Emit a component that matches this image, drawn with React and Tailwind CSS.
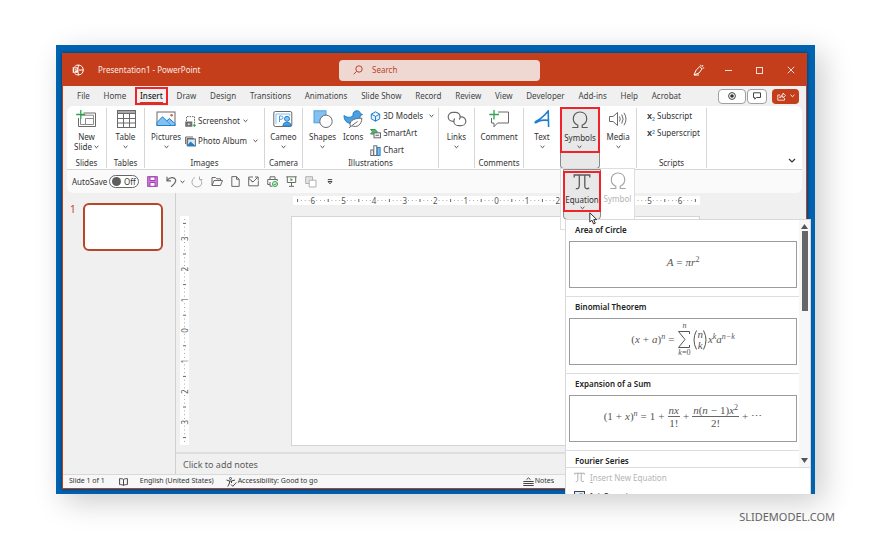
import React, { useState } from 'react';

const TABS_BEFORE = ['File', 'Home'];
const TABS_AFTER = [
  'Draw', 'Design', 'Transitions', 'Animations', 'Slide Show', 'Record',
  'Review', 'View', 'Developer', 'Add-ins', 'Help', 'Acrobat',
];

function Svg({ w = 20, h = 18, children, className = '' }) {
  return (
    <svg
      width={w}
      height={h}
      viewBox={`0 0 ${w} ${h}`}
      fill="none"
      stroke="#6a6a6a"
      strokeWidth="1"
      className={`shrink-0 ${className}`}
      aria-hidden="true"
    >
      {children}
    </svg>
  );
}

function Chevron({ color = '#444', className = '' }) {
  return (
    <Svg w={5} h={4} className={className}>
      <path d="M0.6 0.9 L2.5 2.7 L4.4 0.9" stroke={color} />
    </Svg>
  );
}

function OmegaIcon({ color = '#5a5a5a' }) {
  return (
    <Svg>
      <path
        d="M2.2 16.5 H7.8 V14.2 C5 13 3.3 10.8 3.3 7.8 C3.3 3.8 6 1 10 1 C14 1 16.7 3.8 16.7 7.8 C16.7 10.8 15 13 12.2 14.2 V16.5 H17.8"
        stroke={color}
        strokeWidth="1.2"
      />
    </Svg>
  );
}

function PiIcon({ w = 18, h = 18, color = '#5a5a5a' }) {
  return (
    <svg width={w} height={h} viewBox="0 0 18 18" fill="none" stroke={color} strokeWidth="1.3" aria-hidden="true">
      <path d="M1.2 4.5 V2 H16.8 V4.5 M6.3 2 V12.5 C6.3 15 5 16 2.8 15.6 M11.8 2 V13 C11.8 15.5 13.5 16.4 16.2 15.2" />
    </svg>
  );
}

/* ---------- Ribbon ---------- */

function Group({ label, className = '', children }) {
  return (
    <div className={`flex h-[60px] shrink-0 flex-col border-r border-[#d6d6d6] ${className}`}>
      <div className="flex flex-1 justify-center">{children}</div>
      <div className="h-3 text-center text-[8px] leading-[14px]">{label}</div>
    </div>
  );
}

function BigButton({ icon, label, second, chevron = true }) {
  return (
    <button className="flex flex-col items-center text-[8px] leading-[10px]">
      <span className="mt-[2px] mb-1 flex h-[18px] items-center">{icon}</span>
      <span>{label}</span>
      {second ? (
        <span className="flex items-center gap-[2px]">{second}<Chevron /></span>
      ) : (
        chevron && <span className="flex h-[10px] items-center"><Chevron /></span>
      )}
    </button>
  );
}

function SmallButton({ icon, label, chevronClass }) {
  return (
    <button className="flex h-[11px] items-center gap-[2px] text-[8px] whitespace-nowrap">
      {icon}
      {label}
      {chevronClass && <Chevron className={chevronClass} />}
    </button>
  );
}

function Ribbon() {
  return (
    <div className="mx-1 flex h-16 items-center rounded-t-md border-b border-[#d4d4d4] bg-white">
      <Group label="Slides" className="w-10">
        <BigButton
          label="New"
          second="Slide"
          icon={
            <Svg>
              <path d="M7.5 3 H19.5 V16.5 H2.5 V8" />
              <path d="M4 5.2 H17.5 V14.5 H4.5 V8 M9.5 8.5 V14.5 M9.5 8.5 H17.5" stroke="#8c8c8c" />
              <path d="M4.8 0 V9 M0.2 4.5 H9.2" stroke="#2ea44f" strokeWidth="1.3" />
            </Svg>
          }
        />
      </Group>
      <Group label="Tables" className="w-[38px]">
        <BigButton
          label="Table"
          icon={
            <Svg>
              <rect x="1.5" y="0.5" width="18" height="17" />
              <rect x="1.5" y="0.5" width="18" height="3" fill="#a8a8a8" />
              <path d="M1.5 8.5 H19.5 M1.5 13 H19.5 M7.5 3.5 V17.5 M13.5 3.5 V17.5" />
            </Svg>
          }
        />
      </Group>
      <Group label="Images" className="w-[120px]">
        <div className="flex flex-1 pl-[6px]">
          <BigButton
            label="Pictures"
            icon={
              <Svg>
                <rect x="1" y="2" width="18" height="13.5" fill="#fbfdff" />
                <path d="M1 12.5 L6.5 6.8 L15.5 15.5 H1 Z" fill="#83c1f2" stroke="#1e7fcf" />
                <path d="M10.8 10.8 L13.3 8.6 L19 13.5 V15.5 H15.5" fill="#83c1f2" stroke="#1e7fcf" />
                <circle cx="15.6" cy="5.3" r="1.3" fill="#e8622a" stroke="none" />
              </Svg>
            }
          />
          <div className="flex flex-col gap-[9px] pt-2 pl-1">
            <SmallButton
              label="Screenshot"
              chevronClass="ml-px"
              icon={
                <Svg w={11} h={11}>
                  <path d="M1.5 5 V0.6 H9.5 V7" strokeDasharray="1.5 1" />
                  <rect x="0.8" y="6" width="6" height="4.2" fill="#777" />
                  <circle cx="3.8" cy="8.2" r="1" fill="#ddd" stroke="none" />
                  <path d="M9.3 7.5 V11 M7.7 9.3 H11" stroke="#2ea44f" />
                </Svg>
              }
            />
            <SmallButton
              label="Photo Album"
              chevronClass="ml-1"
              icon={
                <Svg w={11} h={11}>
                  <path d="M0.6 8 V1 H8 M2 9.5 V2.5 H9" />
                  <rect x="2.6" y="3" width="7.8" height="7" fill="#d6eafa" />
                  <path d="M3 9.5 L5.5 6 L9.5 9.5 Z" fill="#1e7fcf" stroke="#1e7fcf" />
                </Svg>
              }
            />
          </div>
        </div>
      </Group>
      <Group label="Camera" className="w-[38px]">
        <BigButton
          label="Cameo"
          icon={
            <Svg>
              <rect x="0.8" y="1.5" width="18" height="15" rx="1.5" />
              <path d="M3 14 V4 H16.8 V6" stroke="#83c1f2" />
              <path d="M6.5 12 V6 H8.2 Q10 6 10 7.7 Q10 9.3 8.2 9.3 H6.5" stroke="#4aa0e0" />
              <circle cx="14" cy="8.8" r="2.5" fill="#83c1f2" stroke="#1e7fcf" />
              <path d="M9.8 16 Q10 12.2 14 12.2 Q18 12.2 18.2 16 Z" fill="#4aa0e0" stroke="#1e7fcf" />
            </Svg>
          }
        />
      </Group>
      <Group label="Illustrations" className="w-[136px]">
        <div className="flex flex-1 gap-[7px] pl-[6px]">
          <BigButton
            label="Shapes"
            icon={
              <Svg>
                <rect x="1" y="0.8" width="12" height="12" fill="#83c1f2" stroke="#4aa0e0" />
                <circle cx="13" cy="11.3" r="6.2" fill="#fff" />
              </Svg>
            }
          />
          <BigButton
            label="Icons"
            chevron={false}
            icon={
              <Svg>
                <path
                  d="M1 5.5 C3.5 7.5 7 8 10 6 C9.5 2.5 11.5 0.8 14 0.8 C16 0.8 17.2 2 17.3 3.5 L19.5 4.5 L17.3 5.6 C17 10 13 13.5 8.5 13.5 C4 13.5 1 10.5 1 5.5 Z"
                  fill="#4aa0e0"
                  stroke="#1e7fcf"
                />
                <path d="M7.5 16.8 C5.5 11.5 10 8 18.8 8.2 C19 14.5 14 18 9 15.8" fill="#fff" />
                <path d="M6 17.8 L14.5 11.5" />
              </Svg>
            }
          />
          <div className="flex flex-col gap-[6px] pt-[3px]">
            <SmallButton
              label="3D Models"
              chevronClass="ml-1"
              icon={
                <Svg w={11} h={11}>
                  <path d="M5.5 0.8 L9.7 3.1 V7.9 L5.5 10.2 L1.3 7.9 V3.1 Z M1.3 3.1 L5.5 5.4 L9.7 3.1 M5.5 5.4 V10.2" stroke="#1e7fcf" fill="#e4f1fb" />
                </Svg>
              }
            />
            <SmallButton
              label="SmartArt"
              icon={
                <Svg w={11} h={11}>
                  <path d="M0.5 1.5 H5 L7.5 3.8 L5 6 H0.5 L2.5 3.8 Z" fill="#58b56f" stroke="#2e9a4b" />
                  <rect x="4" y="4.8" width="6.5" height="5" fill="#f3f3f3" />
                  <path d="M5.5 7.3 H9" />
                </Svg>
              }
            />
            <SmallButton
              label="Chart"
              icon={
                <Svg w={11} h={11}>
                  <rect x="0.8" y="5" width="2.6" height="5.5" />
                  <rect x="3.8" y="0.8" width="3" height="9.7" fill="#fff" />
                  <rect x="7.3" y="2.5" width="2.8" height="8" fill="#83c1f2" stroke="#1e7fcf" />
                </Svg>
              }
            />
          </div>
        </div>
      </Group>
      <Group className="w-9">
        <BigButton
          label="Links"
          icon={
            <Svg>
              <path d="M7.2 11.3 H6 C3.4 11.3 1.2 9.4 1.2 6.8 C1.2 4.2 3.4 2.3 6 2.3 H8.5 C11.1 2.3 13.2 4.2 13.2 6.8 C13.2 7.8 12.8 8.8 12.2 9.5" strokeWidth="1.2" />
              <path d="M12.8 6.8 H14 C16.6 6.8 18.8 8.7 18.8 11.2 C18.8 13.8 16.6 15.7 14 15.7 H11.5 C8.9 15.7 6.8 13.8 6.8 11.2 C6.8 10.2 7.2 9.2 7.8 8.5" strokeWidth="1.2" />
            </Svg>
          }
        />
      </Group>
      <Group label="Comments" className="w-[49px]">
        <BigButton
          label="Comment"
          chevron={false}
          icon={
            <Svg>
              <path d="M9 2 H19.5 V13 H8.5 L5 16.8 V13 H2.5 V8" />
              <path d="M5 0 V9.5 M0.3 4.5 H10" stroke="#2ea44f" strokeWidth="1.3" />
            </Svg>
          }
        />
      </Group>
      <div className="flex h-[60px] w-9 shrink-0 justify-center">
        <BigButton
          label="Text"
          icon={
            <Svg>
              <path d="M3 12 C8 9.5 13 5 16.2 1 L16.6 17 M3 12 C3 13 4.2 13 5 12.2 C7.5 9.8 12 9.8 16.4 10.4" stroke="#1e7fcf" strokeWidth="1.6" />
            </Svg>
          }
        />
      </div>
      <div className="relative flex h-[62px] w-10 shrink-0 flex-col rounded-b-sm border border-t-0 border-[#8a8a8a] bg-[#e8e8e8]">
        <div className="-mx-px flex h-[46px] justify-center border-2 border-[#f0232b]">
          <BigButton label="Symbols" icon={<OmegaIcon />} />
        </div>
        <SymbolsMenu />
      </div>
      <Group className="w-[37px]">
        <BigButton
          label="Media"
          icon={
            <Svg>
              <path d="M1.5 6.5 H5 L9.5 2.5 V15.5 L5 11.5 H1.5 Z" />
              <path d="M11.5 6.5 Q13 9 11.5 11.5 M13.7 4.5 Q16.5 9 13.7 13.5 M16 2.8 Q20 9 16 15.2" />
            </Svg>
          }
        />
      </Group>
      <Group label="Scripts" className="w-[70px]">
        <div className="flex flex-1 flex-col gap-[6px] pt-[3px] pl-[10px]">
          <SmallButton
            label="Subscript"
            icon={<span className="w-2 text-left text-[9px] font-semibold">x<sub className="text-[5px] text-[#1e7fcf]">2</sub></span>}
          />
          <SmallButton
            label="Superscript"
            icon={<span className="w-2 text-left text-[9px] font-semibold">x<sup className="text-[5px] text-[#1e7fcf]">2</sup></span>}
          />
        </div>
      </Group>
      <button className="mt-auto mr-[6px] mb-[5px] ml-auto" aria-label="Collapse ribbon">
        <Svg w={8} h={6}>
          <path d="M1 1 L4 4 L7 1" stroke="#333" strokeWidth="1.2" />
        </Svg>
      </button>
    </div>
  );
}

function SymbolsMenu() {
  return (
    <div className="absolute top-full -left-px z-10 flex h-[62px] w-[75px] items-start border border-[#dedede] bg-white pl-[2px] text-[8px] leading-[10px]">
      <div className="flex h-[51px] w-[38px] shrink-0 flex-col rounded-b-sm border border-[#8a8a8a] bg-[#e8e8e8]">
        <button className="-mx-px mt-px flex h-[41px] flex-col items-center border-2 border-[#f0232b]">
          <PiIcon />
          <span className="mt-1">Equation</span>
          <Chevron className="mt-px" />
        </button>
      </div>
      <button className="flex flex-1 flex-col items-center pt-[3px] text-[#b4b4b4]" disabled>
        <OmegaIcon color="#a6a6a6" />
        <span className="mt-1">Symbol</span>
      </button>
    </div>
  );
}

/* ---------- Quick access toolbar ---------- */

function QuickAccess() {
  const [autoSave, setAutoSave] = useState(false);

  return (
    <div className="mx-1 flex h-[23px] items-center rounded-b-md bg-[#fafafa] pl-[5px] text-[8px]">
      <label className="flex w-[75px] items-center justify-between pr-2">
        AutoSave
        <input
          type="checkbox"
          className="sr-only"
          checked={autoSave}
          onChange={(e) => setAutoSave(e.target.checked)}
        />
        <span className="flex h-[13px] w-[30px] items-center gap-[3px] rounded-full border border-[#666] bg-white pl-[2px]">
          <span className="h-[9px] w-[9px] rounded-full bg-[#5e5e5e]" />
          {autoSave ? 'On' : 'Off'}
        </span>
      </label>
      <button aria-label="Save" className="mr-2">
        <Svg w={11} h={11}>
          <rect x="0.7" y="0.7" width="9.6" height="9.6" fill="#c987d4" stroke="#a33fb5" />
          <rect x="3" y="1" width="5" height="3.5" fill="#fff" stroke="#a33fb5" />
          <rect x="3" y="6.5" width="5" height="3.8" fill="#fff" stroke="#a33fb5" />
        </Svg>
      </button>
      <button aria-label="Undo" className="mr-1.5 flex items-center gap-[3px]">
        <Svg w={11} h={11}>
          <path d="M1 0.8 V4.8 H5 M1 4.6 C3.5 1 8 0.5 9.5 3.5 C10.8 6.5 7.5 8.5 5 10.8" strokeWidth="1.2" />
        </Svg>
        <Chevron />
      </button>
      <button aria-label="Redo" className="mr-2">
        <Svg w={12} h={12}>
          <path d="M8.5 0.5 V3.6 H11.5 M4 1.5 C-0.5 3.5 0 10.5 5.8 10.9 C11 11 12.2 6 8.7 2.8" stroke="#aaa" />
        </Svg>
      </button>
      <button aria-label="Open" className="mr-2">
        <Svg w={12} h={11}>
          <path d="M1 9.5 V1.5 H4.5 L5.8 2.8 H9.5 V4.5 M1 9.5 L3 4.5 H11.5 L9.5 9.5 Z" />
        </Svg>
      </button>
      <button aria-label="New" className="mr-2">
        <Svg w={9} h={11}>
          <path d="M0.8 0.6 H5.5 L8.2 3.3 V10.4 H0.8 Z M5.5 0.6 V3.3 H8.2" />
        </Svg>
      </button>
      <button aria-label="Email" className="mr-2">
        <Svg w={11} h={11}>
          <path d="M10.3 4.5 V9.8 H0.7 V1 H5 M0.7 2.5 L5 6 L10 1 M7 1 H10.2 V4 M3 4.5 L5 6" />
        </Svg>
      </button>
      <button aria-label="Quick print" className="mr-2">
        <Svg w={11} h={11}>
          <path d="M3 3.5 V0.8 H8 V3.5 M3 8.5 H0.7 V3.5 H10.3 V5 M3 6 V10.2 H5.5" />
          <circle cx="8" cy="8" r="2.5" fill="#d8f0de" stroke="#2ea44f" />
          <path d="M6.8 8 L7.8 9 L9.4 7.2" stroke="#2ea44f" />
        </Svg>
      </button>
      <button aria-label="Start from beginning" className="mr-2">
        <Svg w={11} h={11}>
          <path d="M0.3 0.8 H10.7 M1.3 0.8 V6.5 H9.7 V0.8 M5.5 6.5 V10.2 M3 10.3 H8" />
          <path d="M4.5 2 L7 3.7 L4.5 5.3 Z" fill="#2ea44f" stroke="none" />
        </Svg>
      </button>
      <button aria-label="Arrange" className="mr-2.5">
        <Svg w={12} h={12}>
          <path d="M0.7 0.7 H7.5 V7.5 H0.7 Z" stroke="#b0b0b0" fill="#e4e4e4" />
          <path d="M4.2 4.2 H11 V11 H4.2 Z" stroke="#b0b0b0" fill="#fff" />
        </Svg>
      </button>
      <button aria-label="Customize toolbar">
        <Svg w={6} h={6}>
          <path d="M0.8 0.6 H5.2 M1 2.5 H5 L3 4.8 Z" stroke="#444" />
        </Svg>
      </button>
    </div>
  );
}

/* ---------- Rulers ---------- */

function rulerMarks(length, unit) {
  const marks = [];
  const step = unit / 8;
  const count = Math.floor((length / 2 - 2) / step);
  for (let i = -count; i <= count; i++) {
    marks.push({ i, pos: length / 2 + i * step });
  }
  return marks;
}

function Ruler({ length, vertical = false }) {
  const marks = rulerMarks(length, 30.6);
  return (
    <svg
      width={vertical ? 9 : length}
      height={vertical ? length : 9}
      viewBox={vertical ? `0 0 9 ${length}` : `0 0 ${length} 9`}
      className="block shrink-0 bg-white"
      aria-hidden="true"
    >
      <g transform={vertical ? `translate(0 ${length}) rotate(-90)` : undefined}>
        {marks.map(({ i, pos }) => {
          if (i % 8 === 0) {
            return (
              <text key={i} x={pos} y="7.5" fontSize="8" fill="#555" textAnchor="middle">
                {Math.abs(i / 8)}
              </text>
            );
          }
          if (i % 4 === 0) {
            return <rect key={i} x={pos - 0.5} y="3" width="1" height="3" fill="#666" />;
          }
          return <rect key={i} x={pos - 0.5} y="4" width="1" height="1" fill="#aaa" />;
        })}
      </g>
    </svg>
  );
}

/* ---------- Equation gallery ---------- */

function Frac({ top, bottom }) {
  return (
    <span className="inline-flex flex-col items-center">
      <span className="border-b border-[#666] px-px leading-3">{top}</span>
      <span className="leading-3 not-italic">{bottom}</span>
    </span>
  );
}

function Sup({ children }) {
  return <span className="mb-1.5 text-[8px] leading-none">{children}</span>;
}

function Op({ children }) {
  return <span className="px-[3px] not-italic">{children}</span>;
}

function Up({ children }) {
  return <span className="not-italic">{children}</span>;
}

const EQUATIONS = [
  {
    name: 'Area of Circle',
    body: <>A<Op>=</Op>πr<Sup><Up>2</Up></Sup></>,
  },
  {
    name: 'Binomial Theorem',
    body: (
      <>
        <Up>(</Up>x<Op>+</Op>a<Up>)</Up><Sup>n</Sup><Op>=</Op>
        <span className="flex flex-col items-center text-[8px] leading-[8px]">
          <span>n</span>
          <svg width="14" height="19" viewBox="0 0 14 19" fill="none" stroke="#555" aria-hidden="true">
            <path d="M12.5 4 V1.5 H1.5 L8 9.5 L1.5 17.5 H12.5 V15" />
          </svg>
          <span>k<Up>=0</Up></span>
        </span>
        <svg width="4" height="20" viewBox="0 0 4 20" fill="none" stroke="#555" className="ml-[2px]" aria-hidden="true">
          <path d="M3.5 0.5 Q-1.5 10 3.5 19.5" />
        </svg>
        <span className="flex flex-col items-center leading-[11px]"><span>n</span><span>k</span></span>
        <svg width="4" height="20" viewBox="0 0 4 20" fill="none" stroke="#555" className="mr-px" aria-hidden="true">
          <path d="M0.5 0.5 Q5.5 10 0.5 19.5" />
        </svg>
        x<Sup>k</Sup>a<Sup>n−k</Sup>
      </>
    ),
  },
  {
    name: 'Expansion of a Sum',
    body: (
      <>
        <Up>(1</Up><Op>+</Op>x<Up>)</Up><Sup>n</Sup><Op>=</Op><Up>1</Up><Op>+</Op>
        <Frac top="nx" bottom="1!" />
        <Op>+</Op>
        <Frac
          top={<span className="flex items-center">n<Up>(</Up>n<Op>−</Op><Up>1)</Up>x<span className="mb-1 text-[8px] leading-none not-italic">2</span></span>}
          bottom="2!"
        />
        <Op>+</Op><Up>⋯</Up>
      </>
    ),
  },
];

function EquationGallery() {
  return (
    <div className="absolute top-[174px] right-1 bottom-0 z-20 flex w-[246px] flex-col overflow-hidden border border-b-0 border-[#d8d8d8] bg-white">
      <div className="flex h-[248px] shrink-0 border-b border-[#dcdcdc]">
        <div className="flex-1 overflow-hidden">
          {EQUATIONS.map((eq) => (
            <section key={eq.name} className="border-b border-[#dedede] pb-2">
              <h3 className="h-[21px] pl-[9px] text-[8px] leading-[19px] font-semibold text-[#222]">{eq.name}</h3>
              <button
                aria-label={eq.name}
                className="mr-[2px] ml-[3px] flex h-[47px] w-[228px] items-center justify-center border border-[#9c9c9c] pb-1 font-['Liberation_Serif',serif] text-[11px] text-[#555] italic"
              >
                {eq.body}
              </button>
            </section>
          ))}
          <h3 className="pl-[9px] text-[8px] leading-[19px] font-semibold text-[#222]">Fourier Series</h3>
        </div>
        <div className="flex w-[11px] flex-col items-center bg-[#f7f7f7] py-1">
          <svg width="7" height="5" viewBox="0 0 7 5" aria-hidden="true"><path d="M3.5 0 L7 5 H0 Z" fill="#555" /></svg>
          <span className="mt-[2px] h-20 w-[6px] bg-[#666]" />
          <svg width="7" height="5" viewBox="0 0 7 5" className="mt-auto" aria-hidden="true"><path d="M0 0 H7 L3.5 5 Z" fill="#555" /></svg>
        </div>
      </div>
      <button className="flex h-[19px] shrink-0 items-center gap-[5px] pl-2 text-[8px] text-[#b4b4b4]" disabled>
        <PiIcon w={11} h={11} color="#999" />
        <span><u>I</u>nsert New Equation</span>
      </button>
      <button className="flex h-[19px] shrink-0 items-center gap-[5px] pl-2 text-[8px] text-[#333]">
        <Svg w={11} h={11}>
          <rect x="0.5" y="0.5" width="10" height="10" fill="#dcecf8" stroke="#444" />
          <path d="M5.5 3 H8.5" stroke="#1e7fcf" />
        </Svg>
        <span>In<u>k</u> Equation</span>
      </button>
    </div>
  );
}

/* ---------- Window ---------- */

function TitleBar() {
  return (
    <header className="grid h-8 shrink-0 grid-cols-[276px_201px_1fr] items-center bg-[#c43e1c] text-[#fbe9e4]">
      <div className="flex items-center gap-[14px] pl-[9px] text-[8px]">
        <Svg w={12} h={12}>
          <circle cx="6.3" cy="6" r="5" stroke="#fff" />
          <path d="M6.3 1 V11 M6.3 6 H11.3" stroke="#fff" />
          <rect x="0.5" y="3" width="6" height="6" rx="0.6" fill="#fff" stroke="#c43e1c" strokeWidth="0.5" />
          <path d="M2.6 8 V4.3 H3.8 Q4.8 4.3 4.8 5.3 Q4.8 6.3 3.8 6.3 H2.6" stroke="#c43e1c" strokeWidth="0.8" />
        </Svg>
        <span>Presentation1 - PowerPoint</span>
      </div>
      <label className="flex h-[21px] items-center gap-[9px] rounded-sm bg-[#f0d8d2] pl-[14px]">
        <Svg w={10} h={10}>
          <circle cx="6" cy="4" r="3.2" stroke="#b5452a" />
          <path d="M3.7 6.3 L0.7 9.3" stroke="#b5452a" />
        </Svg>
        <input
          type="search"
          aria-label="Search"
          placeholder="Search"
          className="w-full min-w-0 bg-transparent text-[8px] outline-none placeholder:text-[#b5452a]"
        />
      </label>
      <div className="flex items-center justify-end pr-[11px]">
        <button aria-label="Coming soon" className="mr-5">
          <Svg w={12} h={12}>
            <path d="M1 11 L3.2 6 L6.8 2.5 L9 5 L6 9 L1 11 Z M1 11 H6 M7.3 0.8 L8.2 2 M10 1 L8.8 3 M11.2 3.8 L9.6 4.2" stroke="#fff" />
          </Svg>
        </button>
        <button aria-label="Minimize" className="mr-6">
          <Svg w={7} h={7}><path d="M0 3.5 H7" stroke="#f8ddd5" /></Svg>
        </button>
        <button aria-label="Maximize" className="mr-6">
          <Svg w={7} h={7}><rect x="0.5" y="0.5" width="6" height="6" stroke="#f8ddd5" /></Svg>
        </button>
        <button aria-label="Close">
          <Svg w={8} h={8}><path d="M0.8 0.8 L7.2 7.2 M7.2 0.8 L0.8 7.2" stroke="#f8ddd5" /></Svg>
        </button>
      </div>
    </header>
  );
}

function TabRow() {
  return (
    <nav className="flex h-5 shrink-0 items-center pr-[7px] pl-[14px] text-[8px] text-[#444]">
      <div className="flex w-[604px] items-center justify-between">
        {TABS_BEFORE.map((tab) => <button key={tab}>{tab}</button>)}
        <button className="-mx-[5px] flex h-[18px] items-center border-2 border-[#f0232b] px-[3px] text-[#222]">
          <span className="border-b border-[#c43e1c] leading-[13px] font-medium">Insert</span>
        </button>
        {TABS_AFTER.map((tab) => <button key={tab}>{tab}</button>)}
      </div>
      <div className="ml-auto flex items-center">
        <button aria-label="Record" className="flex h-[15px] w-7 items-center justify-center rounded-sm border border-[#a0a0a0] bg-white">
          <Svg w={8} h={8}>
            <circle cx="4" cy="4" r="3.4" stroke="#444" />
            <circle cx="4" cy="4" r="1.8" fill="#333" stroke="none" />
          </Svg>
        </button>
        <button aria-label="Comments" className="ml-px flex h-[15px] w-5 items-center justify-center rounded-sm border border-[#a0a0a0] bg-white">
          <Svg w={8} h={8}>
            <path d="M0.5 0.8 H7.5 V5.5 H3.5 L1.8 7.2 V5.5 H0.5 Z" stroke="#444" />
          </Svg>
        </button>
        <button aria-label="Share" className="ml-[5px] flex h-[15px] w-[27px] items-center justify-center gap-1 rounded-sm bg-[#c43e1c]">
          <Svg w={9} h={9}>
            <path d="M3 3 H0.8 V8.2 H7.5 V6 M2.8 6 C3 3.5 4.5 3 6 3 V1 L8.5 3.6 L6 6 V4.3 C4.5 4.3 3.5 4.8 2.8 6 Z" stroke="#fff" strokeWidth="0.8" />
          </Svg>
          <Chevron color="#fff" />
        </button>
      </div>
    </nav>
  );
}

function Workspace() {
  return (
    <main className="flex min-h-0 flex-1">
      <aside className="flex w-[113px] shrink-0 items-start border-r border-[#cfcfcf] pt-[10px] pl-[7px]">
        <span className="w-[13px] text-[10px] leading-3 text-[#c43e1c]">1</span>
        <button aria-label="Slide 1" className="h-12 w-20 rounded-md border-2 border-[#b7472a] bg-white" />
      </aside>
      <div className="flex min-w-0 flex-1 flex-col overflow-hidden">
        <div className="pt-[3px] pl-[117px]">
          <Ruler length={407} />
        </div>
        <div className="flex flex-1 items-start pt-[11px] pl-1">
          <Ruler length={229} vertical />
          <div className="ml-[102px] h-[230px] w-[409px] border border-[#d4d4d4] bg-white" />
        </div>
        <input
          aria-label="Notes"
          placeholder="Click to add notes"
          className="mt-[6px] h-[22px] w-full border-t-2 border-[#dedede] bg-transparent pl-[7px] text-[9px] placeholder:text-[#5c5c5c]"
        />
      </div>
    </main>
  );
}

function StatusBar() {
  return (
    <footer className="flex h-[14px] shrink-0 items-center border-t border-[#d9d9d9] bg-[#f7f7f7] pl-[6px] text-[7px] text-[#333]">
      <span>Slide 1 of 1</span>
      <Svg w={9} h={8} className="ml-[14px]">
        <path d="M4.5 1.5 C3.5 0.6 2 0.6 0.6 0.6 V6.6 C2 6.6 3.5 6.6 4.5 7.4 C5.5 6.6 7 6.6 8.4 6.6 V0.6 C7 0.6 5.5 0.6 4.5 1.5 V7.4" stroke="#444" />
      </Svg>
      <span className="ml-3">English (United States)</span>
      <Svg w={11} h={10} className="ml-3">
        <circle cx="4.5" cy="1.5" r="1" stroke="#444" />
        <path d="M0.5 3 L3.5 4 V6 L1.8 9.5 M9 3 L5.5 4 V6 M3.5 4 H5.5 M5 7.5 L6.8 9.3 L10.3 5.5" stroke="#444" />
      </Svg>
      <span className="ml-px">Accessibility: Good to go</span>
      <button className="ml-[205px] flex items-center gap-px">
        <Svg w={11} h={9}>
          <path d="M0.3 4.5 H10.7 M0.3 6.5 H10.7 M0.3 8.5 H10.7 M3.5 2.7 L5.5 0.9 L7.5 2.7" stroke="#444" />
        </Svg>
        Notes
      </button>
    </footer>
  );
}

export default function App() {
  return (
    <div className="flex min-h-screen flex-col bg-white font-['Noto_Sans','Open_Sans',sans-serif] text-[#333]">
      <div className="flex flex-1 flex-col pt-[45px] pr-[55px] pl-14">
        <div className="relative flex flex-1 flex-col bg-[#0063b1] pt-2 pr-2 pb-[5px] pl-[6px] shadow-[8px_8px_28px_rgba(0,0,0,0.2)]">
          <div className="flex flex-1 flex-col border border-[#c43e1c] bg-[#f0f0f0] shadow-[0_0_4px_rgba(0,0,0,0.5)]">
            <TitleBar />
            <TabRow />
            <Ribbon />
            <QuickAccess />
            <Workspace />
            <StatusBar />
          </div>
          <EquationGallery />
          <svg width="9" height="13" viewBox="0 0 9 13" className="absolute top-[167px] left-[533px] z-30" aria-hidden="true">
            <path d="M0.8 0.8 V10 L3 8.2 L4.6 12 L6.3 11.2 L4.7 7.6 H7.8 Z" fill="#fff" stroke="#333" />
          </svg>
        </div>
      </div>
      <div className="flex h-[46px] items-center justify-end pr-[35px] text-[11px] text-[#666]">SLIDEMODEL.COM</div>
    </div>
  );
}
